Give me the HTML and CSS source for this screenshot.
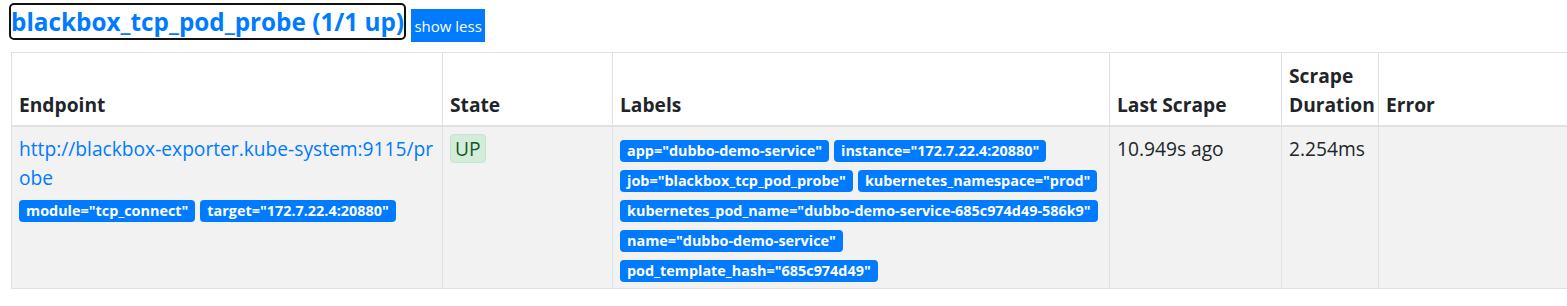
FILE: index.html
```html
<!DOCTYPE html>
<html lang="en">
<head>
  <meta charset="UTF-8">
  <title>Targets</title>
  <link rel="stylesheet" href="styles.css">
</head>
<body>

  <div class="page">
    <h2 class="job-title">
      <a class="job-link" href="#job-blackbox_tcp_pod_probe">blackbox_tcp_pod_probe (1/1 up)</a>
      <button class="show-less">show less</button>
    </h2>

    <table class="targets">
      <colgroup>
        <col class="col-endpoint">
        <col class="col-state">
        <col class="col-labels">
        <col class="col-last">
        <col class="col-duration">
        <col class="col-error">
      </colgroup>
      <thead>
        <tr>
          <th>Endpoint</th>
          <th>State</th>
          <th>Labels</th>
          <th>Last Scrape</th>
          <th>Scrape Duration</th>
          <th>Error</th>
        </tr>
      </thead>
      <tbody>
        <tr>
          <td class="endpoint">
            <a href="#">http://blackbox-exporter.kube-system:9115/probe</a>
            <div class="badges params">
              <span class="badge">module="tcp_connect"</span>
              <span class="badge">target="172.7.22.4:20880"</span>
            </div>
          </td>
          <td><span class="state-up">UP</span></td>
          <td>
            <div class="badges labels">
              <span class="badge">app="dubbo-demo-service"</span>
              <span class="badge">instance="172.7.22.4:20880"</span>
              <span class="badge">job="blackbox_tcp_pod_probe"</span>
              <span class="badge">kubernetes_namespace="prod"</span>
              <span class="badge">kubernetes_pod_name="dubbo-demo-service-685c974d49-586k9"</span>
              <span class="badge">name="dubbo-demo-service"</span>
              <span class="badge">pod_template_hash="685c974d49"</span>
            </div>
          </td>
          <td>10.949s ago</td>
          <td>2.254ms</td>
          <td></td>
        </tr>
      </tbody>
    </table>
  </div>

</body>
</html>
```

FILE: styles.css
```css
body {
  font-family: "Open Sans", "Noto Sans", sans-serif;
  margin: 0;
  padding: 0;
  color: #212529;
  background-color: #fff;
  overflow: hidden;
}

.page {
  padding: 5px 0 0 11px;
}

.job-title {
  display: flex;
  align-items: flex-start;
  gap: 7px;
  margin: 0 0 14px 0;
  font-size: 24.3px;
  font-weight: bold;
}

.job-link {
  display: inline-block;
  height: 33px;
  line-height: 33px;
  color: #007bff;
  text-decoration: none;
  outline: 2px solid #111;
  border-radius: 3px;
}

.show-less {
  margin-top: 4px;
  width: 74px;
  height: 33px;
  padding: 0;
  background-color: #007bff;
  color: white;
  border: none;
  font-family: "Open Sans", sans-serif;
  font-size: 15px;
  cursor: pointer;
}

.targets {
  border-collapse: collapse;
  table-layout: fixed;
  width: 1667px;
  margin-top: -4px;
  font-size: 19.2px;
  line-height: 29px;
  border: 1px solid #dee2e6;
}

.col-endpoint { width: 431px; }
.col-state { width: 170px; }
.col-labels { width: 497px; }
.col-last { width: 172px; }
.col-duration { width: 97px; }
.col-error { width: 300px; }

.targets th,
.targets td {
  border: 1px solid #dee2e6;
  padding: 7px 6px 6px 7px;
  vertical-align: top;
  text-align: left;
}

.targets th {
  padding-top: 8px;
  vertical-align: bottom;
  border-bottom: 2px solid #dee2e6;
  font-weight: bold;
}

.targets tbody tr {
  background-color: #f2f2f2;
}

.endpoint a {
  color: #007bff;
  text-decoration: none;
  word-break: break-all;
}

.badges {
  display: flex;
  flex-wrap: wrap;
  column-gap: 5px;
  row-gap: 8px;
}

.params {
  margin-top: 8px;
}

.labels {
  max-width: 480px;
  margin-top: 6px;
}

.badge {
  display: inline-block;
  height: 22px;
  line-height: 22px;
  padding: 0 7px;
  background-color: #007bff;
  color: white;
  font-size: 14.4px;
  font-weight: bold;
  border-radius: 4px;
  white-space: nowrap;
}

.state-up {
  display: inline-block;
  margin-top: -1px;
  padding: 0 4px;
  background-color: #d4edda;
  color: #155724;
  border: 1px solid #c3e6cb;
  border-radius: 4px;
  line-height: 27px;
}
```
